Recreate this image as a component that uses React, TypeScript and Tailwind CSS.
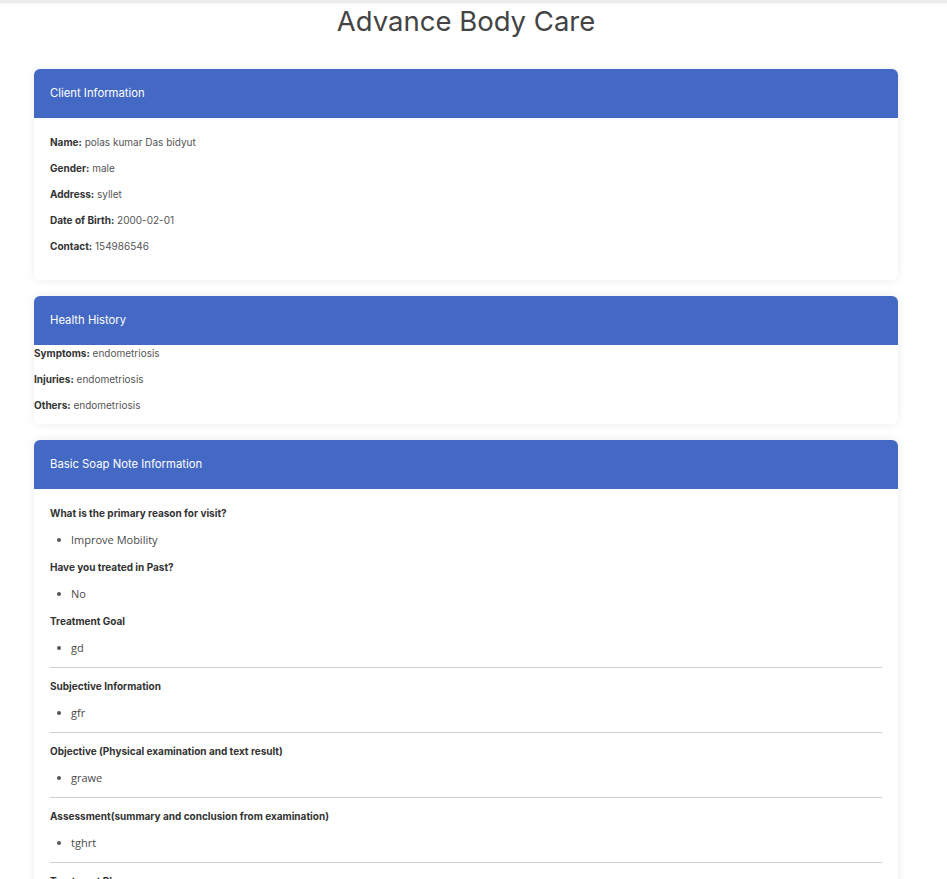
import React from "react";

const heading = "font-['Inter','Noto_Sans',sans-serif]";

function Card({ title, children }: { title: string; children: React.ReactNode }) {
  return (
    <div className="bg-white rounded-[6px] overflow-hidden shadow-[0_0_10px_rgba(0,0,0,0.08)]">
      <div className={`h-[49px] bg-[#4469c4] px-4 flex items-center text-white text-[11.3px] ${heading}`}>
        {title}
      </div>
      {children}
    </div>
  );
}

function Row({ label, value }: { label: string; value: string }) {
  return (
    <p className={`leading-[16px] mb-[10px] text-[10px] ${heading}`}>
      <span className="font-bold text-[#333]">{label}</span>{" "}
      <span className="text-[#555]">{value}</span>
    </p>
  );
}

function Bullet({ text }: { text: string }) {
  return (
    <div className="flex items-center h-[18px] mb-[10px] pl-[7px]">
      <span className="w-[4px] h-[4px] rounded-full bg-[#555] mr-[10px]" />
      <span className="text-[11px] text-[#4a4a4a] font-['Open_Sans',sans-serif] leading-[18px]">{text}</span>
    </div>
  );
}

function Label({ text }: { text: string }) {
  return (
    <div className={`leading-[16px] mb-[10px] text-[10px] font-bold text-[#333] ${heading}`}>{text}</div>
  );
}

function Hr() {
  return <div className="h-px bg-[#d0d0d0] mb-[10px]" />;
}

export default function App() {
  return (
    <div className="min-h-screen bg-white">
      <div className="h-[3px] bg-[#ededed] shadow-[0_1px_2px_rgba(0,0,0,0.05)]" />
      <div className="pl-[34px] pr-[49px]">
        <h1 className={`text-center text-[27.5px] leading-[34px] text-[#444] ${heading} mt-[1px]`}>Advance Body Care</h1>
        <div className="pt-[31px] flex flex-col gap-4">
          <Card title="Client Information">
            <div className="px-4 pt-4 pb-4">
              <Row label="Name:" value="polas kumar Das bidyut" />
              <Row label="Gender:" value="male" />
              <Row label="Address:" value="syllet" />
              <Row label="Date of Birth:" value="2000-02-01" />
              <Row label="Contact:" value="154986546" />
            </div>
          </Card>
          <Card title="Health History">
            <div className="pb-px">
              <Row label="Symptoms:" value="endometriosis" />
              <Row label="Injuries:" value="endometriosis" />
              <Row label="Others:" value="endometriosis" />
            </div>
          </Card>
          <Card title="Basic Soap Note Information">
            <div className="px-4 pt-4 pb-4">
              <Label text="What is the primary reason for visit?" />
              <Bullet text="Improve Mobility" />
              <Label text="Have you treated in Past?" />
              <Bullet text="No" />
              <Label text="Treatment Goal" />
              <Bullet text="gd" />
              <Hr />
              <Label text="Subjective Information" />
              <Bullet text="gfr" />
              <Hr />
              <Label text="Objective (Physical examination and text result)" />
              <Bullet text="grawe" />
              <Hr />
              <Label text="Assessment(summary and conclusion from examination)" />
              <Bullet text="tghrt" />
              <Hr />
              <Label text="Treatment Plan" />
              <Bullet text="plan" />
            </div>
          </Card>
        </div>
      </div>
    </div>
  );
}
